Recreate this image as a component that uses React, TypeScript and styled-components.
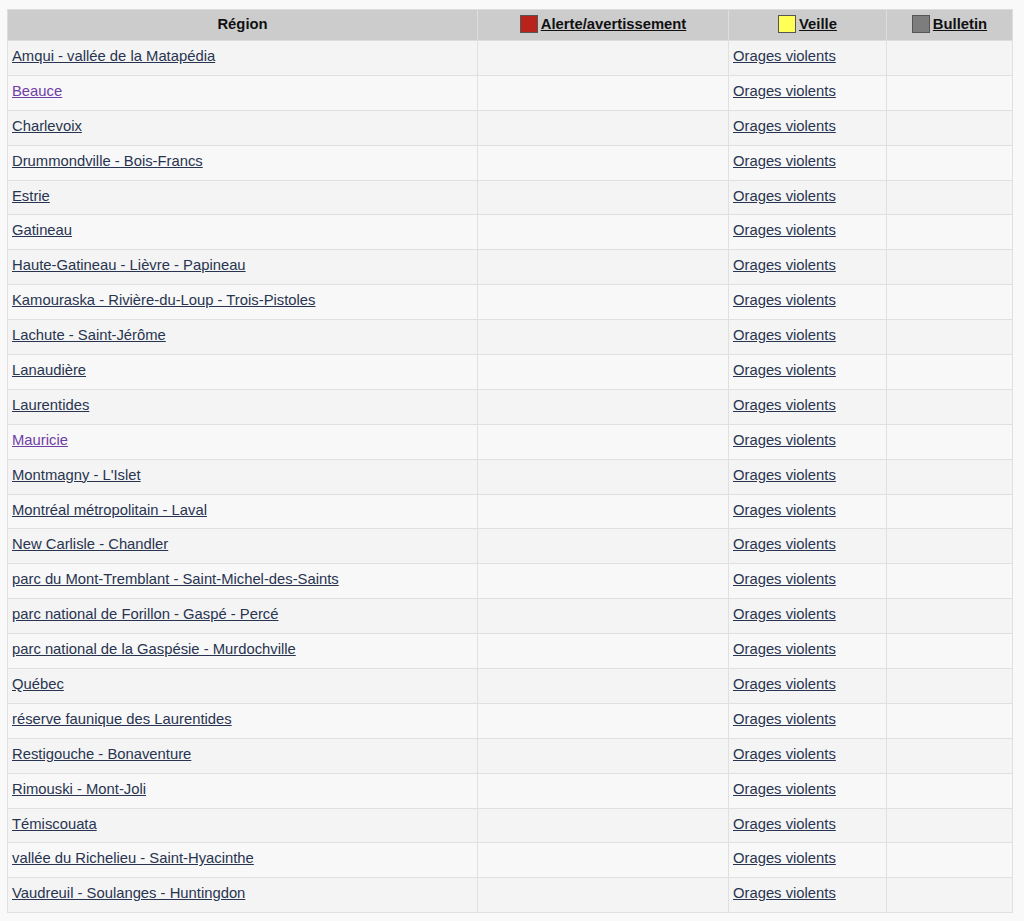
import React from "react";
import styled, { createGlobalStyle } from "styled-components";

const Global = createGlobalStyle`
  html, body { margin: 0; padding: 0; background: #f9f9f9; }
  body { padding: 9px 12px 0 7px; font-family: "Liberation Sans", Arial, sans-serif; font-size: 14.8px; }
`;

const Table = styled.table`
  width: 1005px;
  border-collapse: collapse;
  table-layout: fixed;
  border: 1px solid #e2e2e2;
`;

const Th = styled.th<{ $w: number }>`
  width: ${(p) => p.$w}px;
  height: 31px;
  padding: 0 4px 2px;
  background: #cccccc;
  border: 1px solid #dddddd;
  font-weight: bold;
  font-size: 14.8px;
  color: #111;
  text-align: center;
  vertical-align: middle;
  box-sizing: border-box;
  white-space: nowrap;
`;

const HeadLink = styled.a`
  color: #111;
  text-decoration: underline;
`;

const Swatch = styled.span<{ $c: string }>`
  display: inline-block;
  width: 16px;
  height: 16px;
  background: ${(p) => p.$c};
  border: 1px solid #555;
  vertical-align: -4px;
  margin-right: 3px;
`;

const Tr = styled.tr<{ $odd: boolean }>`
  background: ${(p) => (p.$odd ? "#f4f4f4" : "#f8f8f8")};
`;

const Td = styled.td`
  height: 34.9px;
  padding: 0 4px 4px;
  border: 1px solid #e0e0e0;
  vertical-align: middle;
  box-sizing: border-box;
  white-space: nowrap;
`;

const Link = styled.a<{ $visited?: boolean }>`
  color: ${(p) => (p.$visited ? "#6f3ea6" : "#283450")};
  text-decoration: underline;
  font-size: 14.8px;
`;

const regions = [
  "Amqui - vallée de la Matapédia",
  "Beauce",
  "Charlevoix",
  "Drummondville - Bois-Francs",
  "Estrie",
  "Gatineau",
  "Haute-Gatineau - Lièvre - Papineau",
  "Kamouraska - Rivière-du-Loup - Trois-Pistoles",
  "Lachute - Saint-Jérôme",
  "Lanaudière",
  "Laurentides",
  "Mauricie",
  "Montmagny - L'Islet",
  "Montréal métropolitain - Laval",
  "New Carlisle - Chandler",
  "parc du Mont-Tremblant - Saint-Michel-des-Saints",
  "parc national de Forillon - Gaspé - Percé",
  "parc national de la Gaspésie - Murdochville",
  "Québec",
  "réserve faunique des Laurentides",
  "Restigouche - Bonaventure",
  "Rimouski - Mont-Joli",
  "Témiscouata",
  "vallée du Richelieu - Saint-Hyacinthe",
  "Vaudreuil - Soulanges - Huntingdon",
];

const visited = new Set(["Beauce", "Mauricie"]);

export default function App() {
  return (
    <>
      <Global />
      <Table>
        <thead>
          <tr>
            <Th $w={470}>Région</Th>
            <Th $w={251}>
              <Swatch $c="#b8231c" />
              <HeadLink href="#">Alerte/avertissement</HeadLink>
            </Th>
            <Th $w={158}>
              <Swatch $c="#ffff55" />
              <HeadLink href="#">Veille</HeadLink>
            </Th>
            <Th $w={126}>
              <Swatch $c="#7d7d7d" />
              <HeadLink href="#">Bulletin</HeadLink>
            </Th>
          </tr>
        </thead>
        <tbody>
          {regions.map((r, i) => (
            <Tr key={r} $odd={i % 2 === 0}>
              <Td>
                <Link href="#" $visited={visited.has(r)}>
                  {r}
                </Link>
              </Td>
              <Td />
              <Td>
                <Link href="#">Orages violents</Link>
              </Td>
              <Td />
            </Tr>
          ))}
        </tbody>
      </Table>
    </>
  );
}
